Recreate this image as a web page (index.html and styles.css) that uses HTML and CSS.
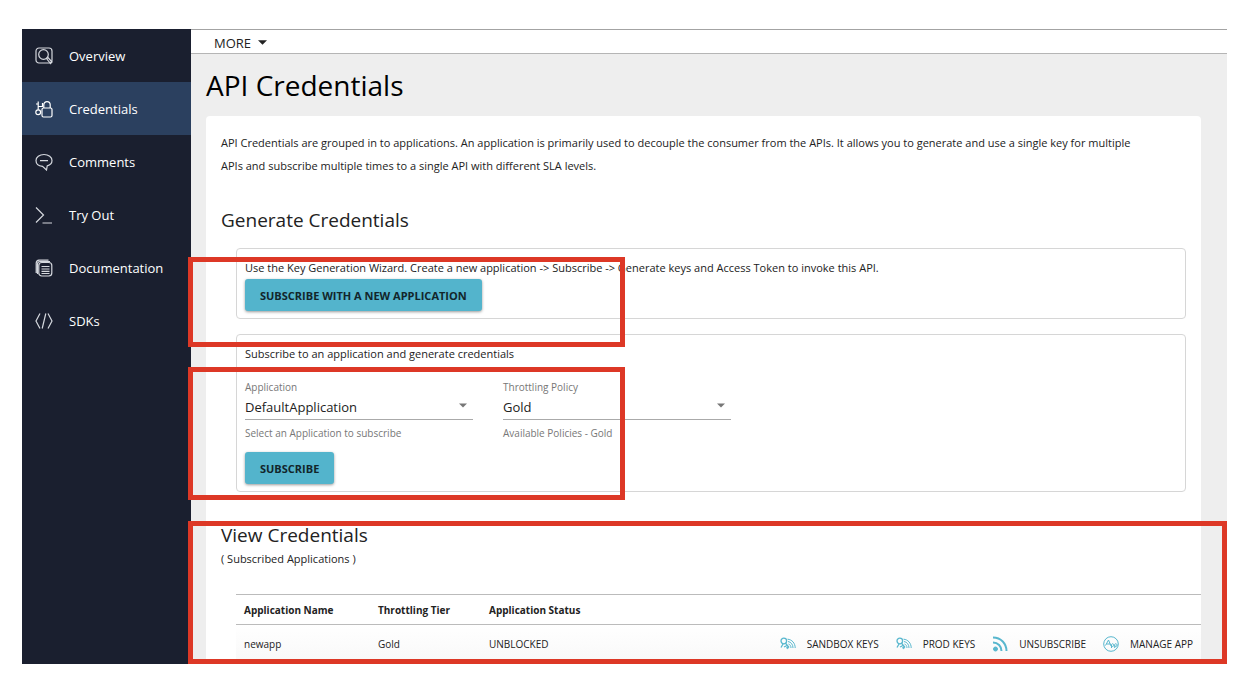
FILE: index.html
```html
<!DOCTYPE html>
<html lang="en">
<head>
<meta charset="utf-8">
<title>API Credentials</title>
<link rel="stylesheet" href="styles.css">
</head>
<body>
<div class="app">
  <nav class="sidebar">
    <a class="nav-item" href="#overview">
      <svg viewBox="0 0 18 18"><rect x="1" y="1" width="16" height="15" rx="3"/><circle cx="8.5" cy="7.5" r="4.8"/><path d="M11.5 11.5l1.5-1 4 4.5-1.5 1.5z"/></svg>
      Overview</a>
    <a class="nav-item active" href="#credentials">
      <svg viewBox="0 0 18 18"><circle cx="3.2" cy="12.2" r="2.4"/><path d="M3.2 9.800V1.500M3.200 6.500h4.300V3M3.200 4h-2.200"/><rect x="7" y="8" width="10" height="9" rx="1.500"/><path d="M8.800 8V4.800a3.200 3.200 0 0 1 6.400 0V8"/></svg>
      Credentials</a>
    <a class="nav-item" href="#comments">
      <svg viewBox="0 0 18 18"><path d="M9 1.500c4.600 0 8 2.600 8 6 0 2.700-2 4.600-4.800 5.400L11.500 17l-4-3.600C3.500 13 1 10.500 1 7.500c0-3.400 3.400-6 8-6zM5 7.700h8"/></svg>
      Comments</a>
    <a class="nav-item" href="#try-out">
      <svg viewBox="0 0 18 18"><path d="M1 1.500L8.500 9 1 16.500M7.500 17H17"/></svg>
      Try Out</a>
    <a class="nav-item" href="#documentation">
      <svg viewBox="0 0 18 18"><rect x="3.800" y="3.500" width="13" height="13.500" rx="3"/><path d="M1.200 14V4A3 3 0 0 1 4 1.200h9.500M2.500 15V5a2.500 2.500 0 0 1 2.500-2.500h10M6.500 7.500h8M6.500 10h8M6.500 12.300h8M6.500 14.500h8"/></svg>
      Documentation</a>
    <a class="nav-item" href="#sdks">
      <svg viewBox="0 0 18 18"><path d="M5 1.500L1 9l4 7.500M13 1.500L17 9l-4 7.500M10.800 1.500L7.200 16.500"/></svg>
      SDKs</a>
  </nav>

  <main class="main">
    <header class="topbar">
      <button class="more" type="button">MORE
        <svg viewBox="0 0 10 5"><path d="M0 0h10L5 5z"/></svg>
      </button>
    </header>
    <h1 class="page-title">API Credentials</h1>

    <div class="card">
      <p class="intro">API Credentials are grouped in to applications. An application is primarily used to decouple the consumer from the APIs. It allows you to generate and use a single key for multiple APIs and subscribe multiple times to a single API with different SLA levels.</p>

      <h2 class="section-title">Generate Credentials</h2>
      <section class="panel">
        <p class="panel-text">Use the Key Generation Wizard. Create a new application -&gt; Subscribe -&gt; Generate keys and Access Token to invoke this API.</p>
        <button class="primary" type="button">SUBSCRIBE WITH A NEW APPLICATION</button>
        <div class="mark mark-wizard"></div>
      </section>

      <section class="panel">
        <p class="panel-text">Subscribe to an application and generate credentials</p>
        <div class="fields">
          <div class="field">
            <label for="application">Application</label>
            <div class="select-wrap">
              <select id="application"><option>DefaultApplication</option></select>
              <svg class="caret" viewBox="0 0 10 5"><path d="M0 0h10L5 5z"/></svg>
            </div>
            <span class="hint">Select an Application to subscribe</span>
          </div>
          <div class="field">
            <label for="policy">Throttling Policy</label>
            <div class="select-wrap">
              <select id="policy"><option>Gold</option></select>
              <svg class="caret" viewBox="0 0 10 5"><path d="M0 0h10L5 5z"/></svg>
            </div>
            <span class="hint">Available Policies - Gold</span>
          </div>
        </div>
        <button class="primary" type="button">SUBSCRIBE</button>
        <div class="mark mark-subscribe"></div>
      </section>

      <section class="view">
        <h2 class="section-title">View Credentials</h2>
        <p class="subtitle">( Subscribed Applications )</p>
        <table class="apps">
          <thead>
            <tr><th class="col-name">Application Name</th><th class="col-tier">Throttling Tier</th><th class="col-status">Application Status</th><th></th></tr>
          </thead>
          <tbody>
            <tr>
              <td>newapp</td><td>Gold</td><td>UNBLOCKED</td>
              <td>
                <div class="actions">
                  <button class="action" type="button"><svg viewBox="0 0 16 16"><circle class="key" cx="3.800" cy="5" r="2.800"/><path class="key" d="M5.500 7.200l3.500 4.300M3 8L1 11.500M4 11l3-1.500"/><circle class="dot" cx="7.500" cy="11.800" r=".8"/><path d="M7.500 3.200c4.500.3 7.700 4 7.700 8.800M8 5.500c3 .5 5 3 5 6.500M8.500 8c1.500.5 2.500 2 2.500 4"/></svg>SANDBOX KEYS</button>
                  <button class="action" type="button"><svg viewBox="0 0 16 16"><circle class="key" cx="3.800" cy="5" r="2.800"/><path class="key" d="M5.500 7.200l3.500 4.300M3 8L1 11.500M4 11l3-1.500"/><circle class="dot" cx="7.500" cy="11.800" r=".8"/><path d="M7.500 3.200c4.500.3 7.700 4 7.700 8.800M8 5.500c3 .5 5 3 5 6.500M8.500 8c1.500.5 2.500 2 2.500 4"/></svg>PROD KEYS</button>
                  <button class="action" type="button"><svg viewBox="0 0 16 16"><circle class="dot" cx="3.500" cy="13" r="2"/><path class="wave" d="M1 1.500c8 0 13.500 6 13.500 13.500M1 6.500c5 0 8.500 4 8.500 8.500"/></svg>UNSUBSCRIBE</button>
                  <button class="action" type="button"><svg viewBox="0 0 16 16"><circle cx="8" cy="8" r="7.300"/><path d="M2.500 9.500l3-5.500 2.500 6M3.500 8h4M8.500 12V8.500a1.300 1.300 0 1 1 .2 1.500M11.700 12V8.500a1.300 1.300 0 1 1 .2 1.500"/></svg>MANAGE APP</button>
                </div>
              </td>
            </tr>
          </tbody>
        </table>
        <div class="mark mark-view"></div>
      </section>
    </div>
  </main>
</div>
</body>
</html>
```
FILE: styles.css
```css
* { box-sizing: border-box; }
body {
  margin: 0;
  padding: 29px 23px 22px 22px;
  background: #fff;
  color: #222;
  font-family: "Open Sans", "Noto Sans", sans-serif;
  font-size: 11px;
}
h1, h2, p { margin: 0; font-weight: 400; }
button, select { font: inherit; color: inherit; }
button { border: 0; background: none; padding: 0; }
svg { flex: none; }

.app { display: flex; }
.sidebar { flex: 0 0 169px; background: #1a1f2f; }
.nav-item {
  display: flex;
  align-items: center;
  gap: 16px;
  height: 53px;
  padding-left: 13px;
  color: #fff;
  font-size: 13px;
  font-weight: 500;
  text-decoration: none;
}
.nav-item.active { background: #2b405f; }
.nav-item svg { width: 18px; height: 18px; fill: none; stroke: #d5d8de; stroke-width: 1.2; }
.nav-item.active svg { stroke: #fff; }

.main {
  flex: 1;
  min-width: 0;
  background: #eee;
}
.topbar {
  height: 25px;
  padding-left: 23px;
  background: #fff;
  border-top: 1px solid #a3a3a3;
  border-bottom: 1px solid #b5b5b5;
  display: flex;
}
.more { display: flex; align-items: center; gap: 7px; padding-top: 2px; font-size: 13px; }
.more svg { width: 9px; height: 5px; fill: #222; }
.page-title { padding: 12px 15px; color: #000; font-size: 28px; line-height: 38px; }

.card {
  margin: 0 26px 0 15px;
  padding: 15px 15px 0;
  background: #fff;
  border-radius: 4px 4px 0 0;
}
.intro { margin-right: 45px; line-height: 23px; }
.section-title { font-size: 19px; line-height: 30px; }
.intro + .section-title { margin: 28px 0 13px; }
.panel {
  position: relative;
  margin: 0 0 15px 15px;
  padding: 8px 8px 7px;
  border: 1px solid #d6d6d6;
  border-radius: 4px;
}
.panel-text { line-height: 22px; }
.primary {
  display: block;
  height: 32px;
  padding: 0 15px;
  border-radius: 3px;
  background: #53b4cc;
  box-shadow: 0 1px 3px rgba(0, 0, 0, .4);
  color: #12262b;
  font-weight: 700;
}
.fields { display: flex; gap: 30px; margin: 15px 0 12px; }
.field { flex: 0 1 228px; display: flex; flex-direction: column; }
.field label, .hint { color: #777; font-size: 10px; line-height: 14px; }
.select-wrap { position: relative; border-bottom: 1px solid #aaa; margin-bottom: 6px; }
.select-wrap select {
  display: block;
  width: 100%;
  height: 25px;
  padding: 0;
  border: 0;
  appearance: none;
  background: none;
  font-size: 13px;
}
.caret { position: absolute; right: 6px; top: 9px; width: 8px; height: 5px; fill: #777; }

.view { position: relative; padding-top: 13px; }
.subtitle { line-height: 18px; }
.apps {
  width: 100%;
  margin: 26px 0 0 15px;
  border-collapse: collapse;
  font-size: 10px;
}
.apps th, .apps td { padding: 0 8px; text-align: left; white-space: nowrap; }
.apps th { height: 30px; font-weight: 700; border-top: 1px solid #bbb; border-bottom: 1px solid #bbb; }
.apps td { height: 39px; }
.apps tbody { background: linear-gradient(#fff, #f8f8f8); }
.col-name { width: 134px; }
.col-tier { width: 111px; }
.actions { display: flex; justify-content: flex-end; gap: 17px; }
.action { display: flex; align-items: center; gap: 11px; }
.action svg { width: 16px; height: 16px; fill: none; stroke: #58b7ce; stroke-width: 1; }
.action .dot { fill: #58b7ce; }
.action .key { stroke-width: 1.3; }
.action .wave { stroke-width: 2; }

.mark { position: absolute; z-index: 1; border: 5px solid #dd3826; pointer-events: none; }
.mark-wizard { left: -49px; top: 8px; width: 437px; height: 90px; }
.mark-subscribe { left: -49px; top: 32px; width: 437px; height: 133px; }
.mark-view { left: -33px; right: -41px; top: 14px; bottom: 0; }
```
